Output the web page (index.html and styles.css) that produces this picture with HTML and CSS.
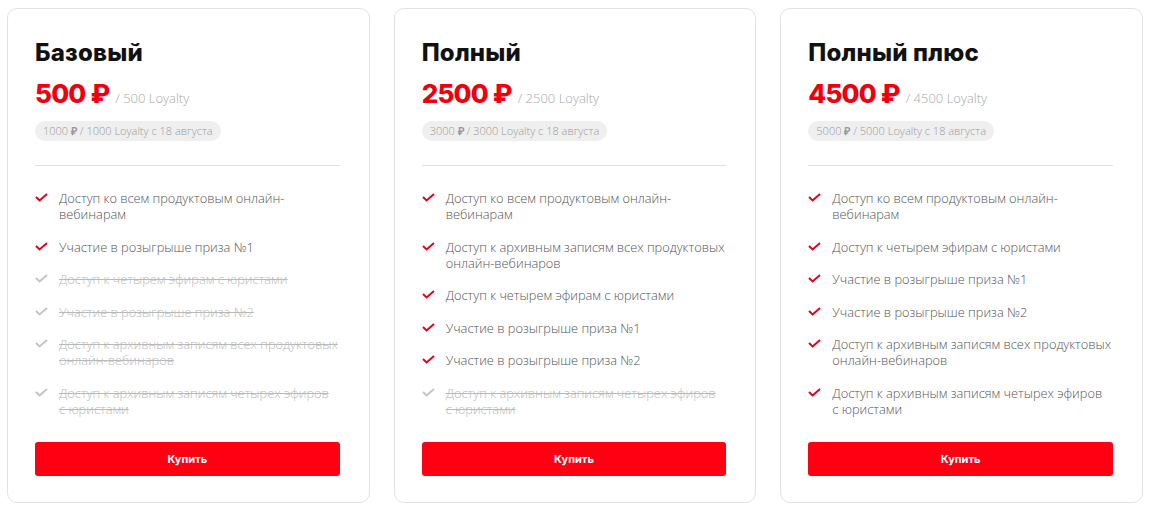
FILE: index.html
```html
<!DOCTYPE html>
<html lang="ru">
<head>
    <meta charset="UTF-8">
    <meta name="viewport" content="width=device-width, initial-scale=1.0">
    <title>Тарифы</title>
    <link rel="stylesheet" href="styles.css">
</head>
<body>
<svg width="0" height="0" style="position:absolute">
    <symbol id="check" viewBox="0 0 13 9">
        <path d="M1 4 L4.6 7.4 L12 1" fill="none" stroke="currentColor" stroke-width="2"/>
    </symbol>
</svg>
<div class="plans">
    <div class="plan">
        <h2 class="plan-title">Базовый</h2>
        <div class="plan-price"><span class="price">500 ₽</span><span class="loyalty">/ 500 Loyalty</span></div>
        <div class="plan-later"><span>1000 <b>₽</b> / 1000 Loyalty с 18 августа</span></div>
        <ul class="features">
            <li class="on"><svg class="tick"><use href="#check"/></svg>Доступ ко всем продуктовым онлайн-вебинарам</li>
            <li class="on"><svg class="tick"><use href="#check"/></svg>Участие в розыгрыше приза №1</li>
            <li class="off"><svg class="tick"><use href="#check"/></svg>Доступ к четырем эфирам с&nbsp;юристами</li>
            <li class="off"><svg class="tick"><use href="#check"/></svg>Участие в розыгрыше приза №2</li>
            <li class="off"><svg class="tick"><use href="#check"/></svg>Доступ к архивным записям всех продуктовых онлайн-вебинаров</li>
            <li class="off"><svg class="tick"><use href="#check"/></svg>Доступ к архивным записям четырех эфиров с&nbsp;юристами</li>
        </ul>
        <button class="buy">Купить</button>
    </div>
    <div class="plan">
        <h2 class="plan-title">Полный</h2>
        <div class="plan-price"><span class="price">2500 ₽</span><span class="loyalty">/ 2500 Loyalty</span></div>
        <div class="plan-later"><span>3000 <b>₽</b> / 3000 Loyalty с 18 августа</span></div>
        <ul class="features">
            <li class="on"><svg class="tick"><use href="#check"/></svg>Доступ ко всем продуктовым онлайн-вебинарам</li>
            <li class="on"><svg class="tick"><use href="#check"/></svg>Доступ к архивным записям всех продуктовых онлайн-вебинаров</li>
            <li class="on"><svg class="tick"><use href="#check"/></svg>Доступ к четырем эфирам с&nbsp;юристами</li>
            <li class="on"><svg class="tick"><use href="#check"/></svg>Участие в розыгрыше приза №1</li>
            <li class="on"><svg class="tick"><use href="#check"/></svg>Участие в розыгрыше приза №2</li>
            <li class="off"><svg class="tick"><use href="#check"/></svg>Доступ к архивным записям четырех эфиров с&nbsp;юристами</li>
        </ul>
        <button class="buy">Купить</button>
    </div>
    <div class="plan">
        <h2 class="plan-title">Полный плюс</h2>
        <div class="plan-price"><span class="price">4500 ₽</span><span class="loyalty">/ 4500 Loyalty</span></div>
        <div class="plan-later"><span>5000 <b>₽</b> / 5000 Loyalty с 18 августа</span></div>
        <ul class="features">
            <li class="on"><svg class="tick"><use href="#check"/></svg>Доступ ко всем продуктовым онлайн-вебинарам</li>
            <li class="on"><svg class="tick"><use href="#check"/></svg>Доступ к четырем эфирам с&nbsp;юристами</li>
            <li class="on"><svg class="tick"><use href="#check"/></svg>Участие в розыгрыше приза №1</li>
            <li class="on"><svg class="tick"><use href="#check"/></svg>Участие в розыгрыше приза №2</li>
            <li class="on"><svg class="tick"><use href="#check"/></svg>Доступ к архивным записям всех продуктовых онлайн-вебинаров</li>
            <li class="on"><svg class="tick"><use href="#check"/></svg>Доступ к архивным записям четырех эфиров с&nbsp;юристами</li>
        </ul>
        <button class="buy">Купить</button>
    </div>
</div>
</body>
</html>
```

FILE: styles.css
```css
body {
    margin: 0;
    padding: 0;
    font-family: 'Open Sans', 'Liberation Sans', sans-serif;
    background-color: #fff;
    color: #1a1a1a;
}

.plans {
    display: grid;
    grid-template-columns: repeat(3, 1fr);
    gap: 24px;
    padding: 8px 8px 0 7px;
}

.plan {
    display: flex;
    flex-direction: column;
    height: 495px;
    box-sizing: border-box;
    padding: 30px 29px 26px 27px;
    border: 1px solid #e2e2e2;
    border-radius: 10px;
}

.plan-title {
    margin: 0;
    font-family: 'Inter', sans-serif;
    font-size: 24px;
    font-weight: 800;
    line-height: 28px;
    letter-spacing: 0.2px;
    color: #111;
}

.plan-price {
    display: flex;
    align-items: baseline;
    margin-top: 12px;
}

.price {
    font-family: 'Inter', sans-serif;
    font-size: 26px;
    font-weight: 800;
    line-height: 30px;
    letter-spacing: -0.8px;
    color: #f0000f;
}

.loyalty {
    margin-left: 6px;
    font-size: 13px;
    font-weight: 300;
    color: #a8a8a8;
}

.plan-later {
    margin-top: 9px;
}

.plan-later span {
    display: inline-block;
    padding: 0 8px;
    height: 20px;
    line-height: 20px;
    font-size: 11px;
    font-weight: 300;
    color: #999;
    background-color: #efefef;
    border-radius: 10px;
}

.plan-later b {
    font-weight: 700;
}

.features {
    list-style: none;
    margin: 24px 0 0 0;
    padding: 24px 0 0 0;
    border-top: 1px solid #e0e0e0;
}

.features li {
    position: relative;
    padding-left: 24px;
    margin-bottom: 16.5px;
    font-size: 12.8px;
    font-weight: 300;
    line-height: 16px;
    color: #555;
}

.tick {
    position: absolute;
    left: 0;
    top: 3px;
    width: 13px;
    height: 9px;
    color: #e3001b;
}

.features li.off {
    color: #b9b9b9;
    text-decoration: line-through;
}

.features li.off .tick {
    color: #c4c4c4;
}

.buy {
    margin-top: auto;
    width: 100%;
    height: 34px;
    border: none;
    border-radius: 3px;
    background-color: #ff0013;
    color: #fff;
    font-family: 'Inter', sans-serif;
    font-size: 11px;
    font-weight: 700;
    cursor: pointer;
}
```
